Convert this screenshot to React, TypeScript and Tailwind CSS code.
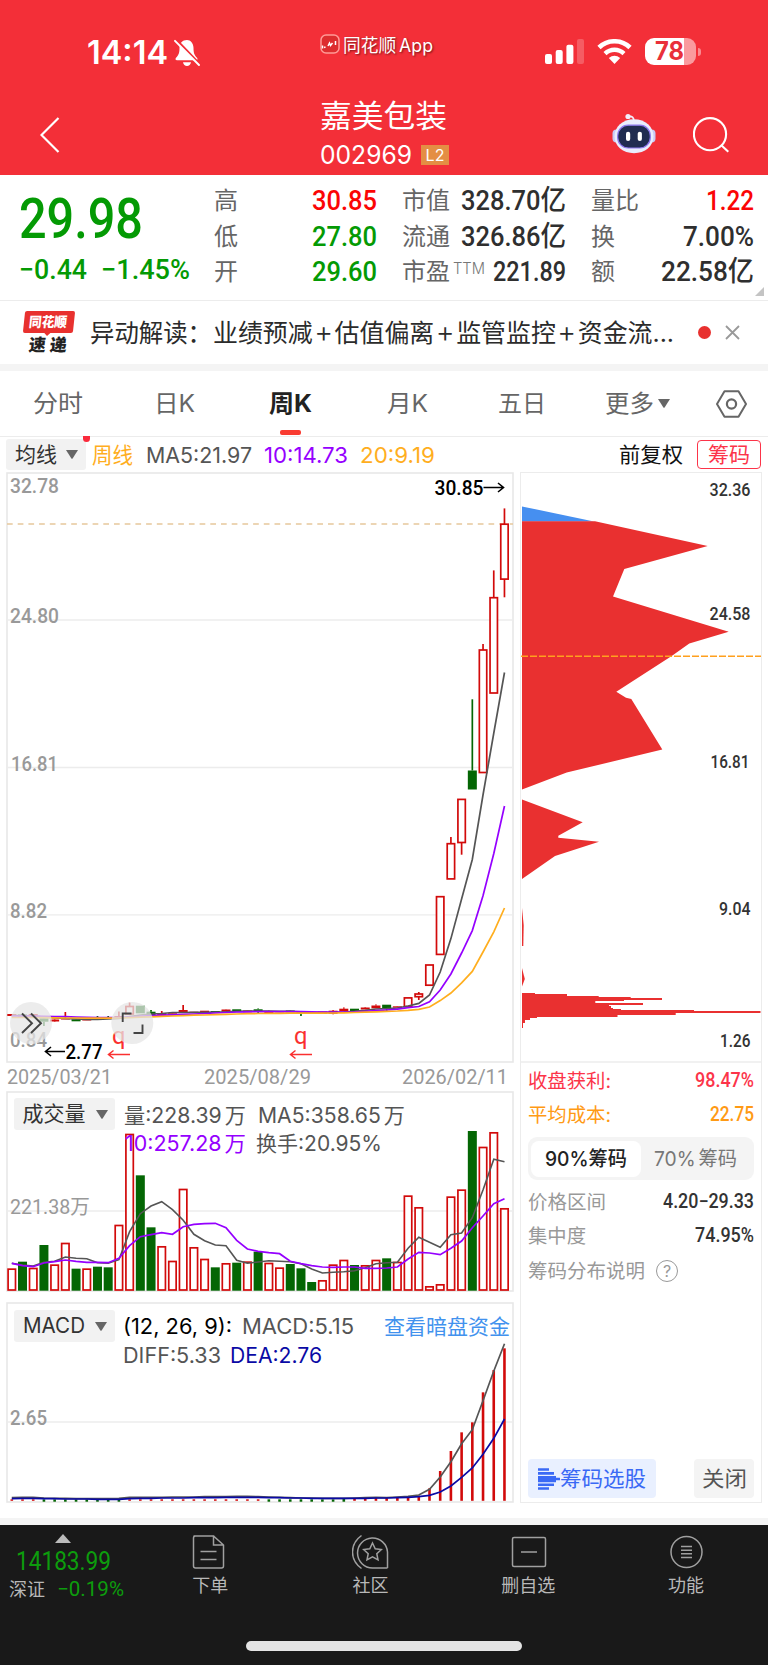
import React, { useLayoutEffect, useRef } from "react";

const X0 = 11.8;
const STEP = 10.71;
const cx = (i: number) => X0 + STEP * i;

/** Single-line text condensed or widened horizontally to fill the width of its box. */
function Fit({ c, children }: { c: string; children: React.ReactNode }) {
  const box = useRef<HTMLSpanElement>(null);
  const inner = useRef<HTMLSpanElement>(null);
  useLayoutEffect(() => {
    if (!box.current || !inner.current) return;
    inner.current.style.transform = "none";
    const w = inner.current.getBoundingClientRect().width;
    inner.current.style.transform = `scaleX(${box.current.clientWidth / w})`;
  });
  return (
    <span ref={box} className={`block shrink-0 whitespace-nowrap text-left ${c}`}>
      <span ref={inner} className="inline-block origin-left">
        {children}
      </span>
    </span>
  );
}

const DIN = "font-['Roboto','Noto_Sans_CJK_SC',sans-serif]";

function Caret({ c }: { c: string }) {
  return (
    <svg viewBox="0 0 12 9" className={`h-[9px] w-[12px] shrink-0 ${c}`}>
      <path d="M0 0H12L6.6 8.4Q6 9 5.4 8.4Z" fill="currentColor" />
    </svg>
  );
}

function StatusBar() {
  return (
    <div className="flex h-[84px] items-start text-white">
      <Fit c="ml-[87px] mt-[35px] w-[81px] text-[32px] font-semibold leading-[36px]">14:14</Fit>
      <svg viewBox="0 0 26 28" className="ml-[6px] mt-[39px] h-[28px] w-[26px]">
        <path d="M13 1c-4.600 0-7.500 3.500-7.500 8 0 5.500-1.200 7.400-3.500 9.800-1 1.200-.5 2.500 1 2.500h19c1.500 0 2-1.300 1-2.500-2.300-2.400-3.500-4.300-3.500-9.800 0-4.500-2.900-8-6.500-8zM9 23.200h8c-.3 2.400-2 3.800-4 3.800s-3.700-1.400-4-3.800z" fill="#fff" />
        <path d="M2 .5L26 25.500" stroke="#f32f38" strokeWidth="2.500" />
        <path d="M1 1.800L25 26" stroke="#fff" strokeWidth="1.900" strokeLinecap="round" />
      </svg>
      <svg viewBox="0 0 20 20" className="ml-[120px] mt-[34px] h-[20px] w-[20px]">
        <rect x="1" y="1" width="18" height="18" rx="5" fill="#dd2d2f" stroke="#ff9a97" strokeWidth="1.500" />
        <path d="M2.500 11.500v3M4 13.500l1.500-.5M8 12l1.500-3 1 2.500 2-2.500M15.500 7v4" stroke="#fff" strokeWidth="1.500" fill="none" />
      </svg>
      <Fit c="ml-[3px] mt-[35px] w-[90px] text-[18px] leading-[22px] [text-shadow:1px_1px_2px_#7a1418]">同花顺<span className="ml-[3px]">App</span></Fit>
      <svg viewBox="0 0 39 25" className="ml-[112px] mt-[39px] h-[25px] w-[39px]">
        <rect x="0" y="15" width="7" height="10" rx="2" fill="#fff" />
        <rect x="10.700" y="11" width="7" height="14" rx="2" fill="#fff" />
        <rect x="21.400" y="5.700" width="7" height="19.300" rx="2" fill="#fff" />
        <rect x="32" y="0" width="7" height="25" rx="2" fill="#fff" opacity=".22" />
      </svg>
      <svg viewBox="0 0 35 25" className="ml-[13px] mt-[39px] h-[25px] w-[35px]" fill="none" stroke="#fff">
        <path d="M2 8.500C10.500 .2 24.500 .2 33 8.500" strokeWidth="4.600" />
        <path d="M8 14.700C13.500 9.500 21.500 9.500 27 14.700" strokeWidth="4.400" />
        <path d="M17.500 25L11.800 19Q17.500 14.500 23.200 19Z" fill="#fff" stroke="none" />
      </svg>
      <div className="ml-[13px] mt-[38px] flex h-[27px] w-[51px] items-center rounded-[9px] bg-linear-to-r from-white from-[39px] to-[#fa9a9e] to-[39px]">
        <Fit c="ml-[10px] w-[29px] text-[25px] font-bold leading-[31px] text-[#e9303a]">78</Fit>
      </div>
      <div className="ml-[1.500px] mt-[48px] h-[8px] w-[3px] rounded-r-full bg-[#fa8a90]" />
    </div>
  );
}

function Header() {
  return (
    <header className="h-[175px] bg-[#f32f38] text-white">
      <StatusBar />
      <div className="flex h-[90px] items-start">
        <svg viewBox="0 0 20 36" className="ml-[40px] mt-[33px] h-[36px] w-[20px]">
          <path d="M18.500 1L1.500 18L18.500 35" fill="none" stroke="#fff" strokeWidth="2.200" />
        </svg>
        <div className="ml-[260px] w-[130px]">
          <Fit c="mt-[14px] w-[127px] text-[31px] leading-[36px]">嘉美包装</Fit>
          <div className="mt-[6px] flex items-center">
            <Fit c="w-[92px] text-[25px] leading-[30px]">002969</Fit>
            <span className="ml-[9px] block h-[20px] w-[28px] shrink-0 bg-[#e48e44] text-center text-[16px] leading-[20px]">L2</span>
          </div>
        </div>
        <svg viewBox="0 0 44 42" className="ml-[162px] mt-[29px] h-[42px] w-[44px]">
          <circle cx="16" cy="3.500" r="2.600" fill="#f2eefc" />
          <path d="M17 3.500Q22 3 21.800 8" fill="none" stroke="#f2eefc" strokeWidth="1.700" />
          <rect x="0.500" y="16.500" width="8" height="13" rx="4" fill="#c9caf6" />
          <rect x="35.500" y="16.500" width="8" height="13" rx="4" fill="#c9caf6" />
          <path d="M22 6.300C33.500 6.300 41.500 14 41.500 23.500S33 40.200 22 40.200 2.500 33 2.500 23.500 10.500 6.300 22 6.300Z" fill="#e9edfd" />
          <rect x="5.700" y="12.200" width="32.600" height="22.800" rx="10.500" fill="#202c50" stroke="#8d78ee" strokeWidth="1.200" />
          <rect x="14" y="18.700" width="4.200" height="9.300" rx="2.100" fill="#fff" />
          <rect x="25.700" y="18.700" width="4.200" height="9.300" rx="2.100" fill="#fff" />
        </svg>
        <svg viewBox="0 0 36 36" className="ml-[37px] mt-[33px] h-[36px] w-[36px]" fill="none" stroke="#fff" strokeWidth="2.100">
          <circle cx="17" cy="17.200" r="16.100" />
          <path d="M28.300 28.300L35.300 34.800" />
        </svg>
      </div>
    </header>
  );
}

function Quote() {
  const lab = "text-[24px] leading-[36px] text-[#666]";
  const val = `${DIN} text-[28px] font-medium leading-[36px]`;
  const row = "flex h-[35.500px] items-center";
  return (
    <section className="relative flex h-[125px]">
      <div className={`ml-[19px] w-[195px] shrink-0 text-[#049a04] ${DIN} font-medium`}>
        <Fit c="mt-[16px] w-[124px] text-[56px] leading-[56px]">29.98</Fit>
        <div className="mt-[7px] flex">
          <Fit c="w-[68px] text-[28px] leading-[32px]">−0.44</Fit>
          <Fit c="ml-[14px] w-[89px] text-[28px] leading-[32px]">−1.45%</Fit>
        </div>
      </div>
      <div className="mt-[8.500px] w-[163px] shrink-0">
        <div className={row}><Fit c={`w-[24px] ${lab}`}>高</Fit><Fit c={`ml-auto w-[65px] text-[#fb0505] ${val}`}>30.85</Fit></div>
        <div className={row}><Fit c={`w-[24px] ${lab}`}>低</Fit><Fit c={`ml-auto w-[65px] text-[#049a04] ${val}`}>27.80</Fit></div>
        <div className={row}><Fit c={`w-[24px] ${lab}`}>开</Fit><Fit c={`ml-auto w-[65px] text-[#049a04] ${val}`}>29.60</Fit></div>
      </div>
      <div className="ml-[25px] mt-[8.500px] w-[164px] shrink-0 text-[#2f2f2f]">
        <div className={row}><Fit c={`w-[48px] ${lab}`}>市值</Fit><Fit c={`ml-auto w-[105px] ${val}`}>328.70亿</Fit></div>
        <div className={row}><Fit c={`w-[48px] ${lab}`}>流通</Fit><Fit c={`ml-auto w-[105px] ${val}`}>326.86亿</Fit></div>
        <div className={row}>
          <Fit c={`w-[48px] ${lab}`}>市盈</Fit>
          <Fit c="mb-[8px] ml-[3px] w-[32px] text-[16px] font-light leading-[20px] text-[#777]">TTM</Fit>
          <Fit c={`ml-auto w-[73px] ${DIN} text-[27px] font-medium leading-[36px]`}>221.89</Fit>
        </div>
      </div>
      <div className="ml-[25px] mt-[8.500px] w-[163px] shrink-0 text-[#2f2f2f]">
        <div className={row}><Fit c={`w-[48px] ${lab}`}>量比</Fit><Fit c={`ml-auto w-[48px] text-[#fb0505] ${val}`}>1.22</Fit></div>
        <div className={row}><Fit c={`w-[24px] ${lab}`}>换</Fit><Fit c={`ml-auto w-[71px] ${val}`}>7.00%</Fit></div>
        <div className={row}><Fit c={`w-[24px] ${lab}`}>额</Fit><Fit c={`ml-auto w-[93px] ${val}`}>22.58亿</Fit></div>
      </div>
      <svg viewBox="0 0 9 9" className="absolute bottom-[4px] right-[4px] h-[9px] w-[9px]"><path d="M9 0V9H0Z" fill="#c4c4c4" /></svg>
    </section>
  );
}

function Plus() {
  return <span className="mx-[1.500px] inline-block text-[29px] font-light leading-[20px]">+</span>;
}

function News() {
  return (
    <section className="flex h-[64px] items-center border-t border-[#ececec]">
      <div className="ml-[22px] flex h-[44px] w-[54px] shrink-0 flex-col items-center">
        <div className="relative flex h-[22px] w-[50px] -skew-x-6 items-center justify-center rounded-[2px] bg-[#e8312f] text-white">
          <Fit c="w-[40px] text-[14px] font-black leading-[20px]">同花顺</Fit>
          <span className="absolute -bottom-[2px] left-[22px] h-[5px] w-[5px] rotate-45 bg-[#e8312f]" />
        </div>
        <div className="mt-[2px] flex -skew-x-6 gap-[2px] text-[17px] font-black leading-[20px] text-[#222]">
          <Fit c="w-[19px]">速</Fit>
          <Fit c="w-[19px]">递</Fit>
        </div>
      </div>
      <div className="ml-[14px] flex text-[25px] leading-[36px] text-[#2b2b2b]">
        <Fit c="w-[122px]">异动解读：</Fit>
        <Fit c="ml-[1px] w-[461px]">业绩预减<Plus />估值偏离<Plus />监管监控<Plus />资金流...</Fit>
      </div>
      <span className="ml-[24px] h-[13px] w-[13px] rounded-full bg-[#e8312f]" />
      <svg viewBox="0 0 15 15" className="ml-[14px] h-[15px] w-[15px]"><path d="M1 1L14 14M14 1L1 14" stroke="#999" strokeWidth="1.800" /></svg>
    </section>
  );
}

function Tabs() {
  const t = "text-[24px] leading-[36px]";
  return (
    <nav className="flex h-[66px] items-center border-b border-[#ececec] text-[#666]">
      <Fit c={`ml-[33px] w-[50px] ${t}`}>分时</Fit>
      <Fit c={`ml-[71px] w-[41px] ${t}`}>日K</Fit>
      <div className="relative ml-[74px]">
        <Fit c={`w-[43px] font-bold text-[#222] ${t}`}>周K</Fit>
        <span className="absolute -bottom-[13px] left-[11px] h-[5px] w-[21px] rounded-[2px] bg-[#f93b31]" />
      </div>
      <Fit c={`ml-[75px] w-[41px] ${t}`}>月K</Fit>
      <Fit c={`ml-[70px] w-[48px] ${t}`}>五日</Fit>
      <Fit c={`ml-[59px] w-[49px] ${t}`}>更多</Fit>
      <Caret c="ml-[4px] text-[#666]" />
      <svg viewBox="0 0 31 28" className="ml-[46px] h-[28px] w-[31px]" fill="none" stroke="#666" strokeWidth="2">
        <path d="M8.500 1.200H22.500L30 14L22.500 26.800H8.500L1 14Z" strokeLinejoin="round" />
        <circle cx="15.500" cy="14" r="4.600" strokeWidth="2.200" />
      </svg>
    </nav>
  );
}

function MaRow() {
  const t = "text-[22px] leading-[30px]";
  return (
    <div className="flex h-[35px] items-center">
      <div className="relative ml-[6px] flex h-[31px] w-[80px] items-center rounded-[3px] bg-[#f2f2f2] pl-[9px] text-[#333]">
        <Fit c="w-[42px] text-[21px] leading-[30px]">均线</Fit>
        <Caret c="ml-[9px] text-[#666]" />
        <span className="absolute -right-[4px] -top-[3px] h-[6px] w-[7px] rounded-b-full bg-[#fa2a3c]" />
      </div>
      <Fit c={`ml-[6px] w-[41px] text-[#ffae1e] ${t}`}>周线</Fit>
      <Fit c={`ml-[13px] w-[106px] text-[#555] ${t}`}>MA5:21.97</Fit>
      <Fit c={`ml-[12px] w-[84px] text-[#9500ff] ${t}`}>10:14.73</Fit>
      <Fit c={`ml-[12px] w-[75px] text-[#ffae1e] ${t}`}>20:9.19</Fit>
      <Fit c="ml-[184px] w-[64px] text-[21px] leading-[30px] text-[#111]">前复权</Fit>
      <div className="ml-[14px] flex h-[29px] w-[64px] items-center justify-center rounded-[4px] border-[1.500px] border-[#fc3449] text-[#fc3449]">
        <Fit c="w-[42px] text-[21px] leading-[26px]">筹码</Fit>
      </div>
    </div>
  );
}

type Candle = [up: number, high: number, top: number, bottom: number, low: number];
const candles: Candle[] = [
  [1, 1014, 1014, 1016, 1016], [0, 1014, 1014.5, 1016.5, 1016.5], [1, 1014, 1014, 1016, 1016], [0, 1018, 1018.3, 1021.7, 1026],
  [1, 1019, 1019.5, 1021.5, 1022], [1, 1012, 1018, 1019.5, 1019.5], [0, 1019, 1019.3, 1021.3, 1021.3], [1, 1019, 1019.3, 1020.5, 1020.5],
  [0, 1016, 1017, 1018.5, 1018.5], [0, 1016, 1017, 1018.5, 1018.5], [1, 1011.5, 1016, 1018, 1018.5], [1, 1002.7, 1006.5, 1014, 1014],
  [0, 1005.7, 1005.7, 1013.3, 1013.3], [0, 1010, 1011.7, 1015, 1015], [1, 1011, 1013, 1015, 1015], [1, 1013, 1013.3, 1014.7, 1015],
  [1, 1005, 1010, 1012.3, 1012.3], [1, 1011.7, 1011.7, 1013, 1013], [1, 1010.7, 1010.7, 1012.5, 1012.5], [0, 1011, 1011, 1012.3, 1012.3],
  [1, 1009.3, 1009.5, 1011.7, 1011.7], [0, 1009.3, 1009.3, 1011, 1011], [1, 1010.3, 1010.5, 1012.3, 1012.3], [0, 1008.5, 1009.3, 1012, 1014],
  [1, 1010.7, 1011, 1013.3, 1013.3], [1, 1011.3, 1011.3, 1012.3, 1012.3], [0, 1010.3, 1010.5, 1012.3, 1012.3], [0, 1012, 1012.3, 1014, 1016],
  [0, 1012, 1012, 1013.7, 1013.7], [1, 1011.3, 1011.5, 1013.7, 1013.7], [1, 1010, 1010.7, 1013.7, 1014.3], [1, 1007.5, 1008.7, 1011.3, 1011.3],
  [0, 1008.7, 1008.7, 1011, 1011], [1, 1007, 1007.5, 1009.5, 1009.5], [1, 1004.5, 1005.5, 1008.3, 1008.3], [0, 1004.7, 1004.7, 1008, 1011.5],
  [1, 1006, 1006.3, 1007.7, 1007.7], [1, 997.9, 997.9, 1006.6, 1006.6], [1, 992, 994, 996.7, 1000], [1, 965, 965, 985.2, 985.2],
  [1, 896.7, 896.7, 954.4, 954.4], [1, 837, 843.7, 878.9, 878.9], [1, 799.4, 799.4, 842.5, 854.7], [0, 699.3, 770.5, 789.5, 789.5],
  [1, 644, 650, 772.5, 772.5], [1, 570.4, 597.7, 693, 693], [1, 508.4, 524.2, 579.1, 597.3],
];

const ma5 = [1015.5, 1015.5, 1016, 1017, 1018, 1018.5, 1019, 1019.5, 1019.5, 1019, 1018.5, 1016.5, 1015, 1014, 1013.5, 1012.5, 1012.5, 1012.3, 1012.3, 1012, 1011.8, 1011.3, 1011.2, 1011.2, 1011.2, 1011.3, 1011.3, 1011.8, 1012.3, 1012.5, 1012.3, 1012, 1011.3, 1010.3, 1009, 1008.7, 1008, 1006, 1003.4, 995, 972, 938.6, 899, 859.5, 795, 733, 672.5];
const ma10 = [1016, 1016, 1016, 1016.3, 1016.5, 1016.7, 1017, 1017.3, 1017.5, 1017.5, 1017.5, 1017, 1016.3, 1015.7, 1015.2, 1014.8, 1014.3, 1014, 1013.5, 1013, 1012.5, 1012, 1011.8, 1011.7, 1011.7, 1011.7, 1011.7, 1011.7, 1011.8, 1012, 1012, 1012, 1011.8, 1011.3, 1010.7, 1010, 1009.2, 1007.7, 1006.5, 1001.8, 990, 974, 953, 930.6, 895.8, 853.5, 806];
const ma20 = [1017.5, 1017.5, 1017.5, 1017.6, 1017.8, 1018, 1018, 1018.2, 1018.2, 1018.2, 1018, 1017.7, 1017.2, 1016.8, 1016.3, 1016, 1015.6, 1015.2, 1015, 1014.7, 1014.3, 1014, 1013.7, 1013.5, 1013.4, 1013.3, 1013.2, 1013.2, 1013.2, 1013.2, 1013, 1012.8, 1012.5, 1012.2, 1011.8, 1011.3, 1011, 1010.3, 1009.3, 1007, 1000.6, 993, 982.8, 971.4, 952, 931.8, 908];

const pts = (ys: number[], f = (v: number) => v) => ys.map((y, i) => `${cx(i).toFixed(1)},${f(y).toFixed(1)}`).join(" ");

function AxisText({ x, y, w, children, size = 20.5, fill = "#999", weight = 500 }: { x: number; y: number; w: number; children: string; size?: number; fill?: string; weight?: number }) {
  return (
    <text x={x} y={y} textLength={w} lengthAdjust="spacingAndGlyphs" fontSize={size} fontWeight={weight} fill={fill} className={DIN}>
      {children}
    </text>
  );
}

function PriceChart() {
  return (
    <div className="relative h-[591px] w-[508px]">
      <svg viewBox="6 472 508 591" className="block h-[591px] w-[508px]">
        <rect x="7" y="473" width="506" height="589" fill="none" stroke="#e8e8e8" strokeWidth="1.600" />
        {[620, 767.5, 914.8].map((y) => <line key={y} x1="7" x2="513" y1={y} y2={y} stroke="#ececec" strokeWidth="1.300" />)}
        <line x1="7" x2="513" y1="524" y2="524" stroke="#e6c79c" strokeWidth="1.500" strokeDasharray="5.700 5" />
        <AxisText x={10} y={493} w={49}>32.78</AxisText>
        <AxisText x={10} y={623} w={49}>24.80</AxisText>
        <AxisText x={11} y={770.5} w={47}>16.81</AxisText>
        <AxisText x={10} y={918} w={37}>8.82</AxisText>
        <AxisText x={10} y={1047} w={37}>0.84</AxisText>
        {candles.map(([up, high, top, bottom, low], i) => {
          const x = cx(i);
          const col = up ? "#d20a0a" : "#046604";
          const thin = bottom - top < 3.2 && i !== 38;
          return (
            <g key={i} stroke={col} strokeWidth="1.700" fill={up && !thin ? "#fff" : col}>
              {high < top && <line x1={x} x2={x} y1={high} y2={top} />}
              {low > bottom && <line x1={x} x2={x} y1={bottom} y2={low} />}
              {up && !thin ? (
                <rect x={x - 3.7} y={top} width="7.400" height={bottom - top} />
              ) : (
                <rect x={x - 4.5} y={top} width="9" height={bottom - top} stroke="none" />
              )}
            </g>
          );
        })}
        <polyline points={pts(ma5)} fill="none" stroke="#555" strokeWidth="1.700" />
        <polyline points={pts(ma10)} fill="none" stroke="#9500ff" strokeWidth="1.700" />
        <polyline points={pts(ma20)} fill="none" stroke="#ffae1e" strokeWidth="1.700" />
        <AxisText x={434.5} y={495} w={49} fill="#000">30.85</AxisText>
        <path d="M483.500 487.500H503M498 483L503.500 487.500L498 492" fill="none" stroke="#000" strokeWidth="1.600" />
        <AxisText x={65.5} y={1059} w={37} fill="#000">2.77</AxisText>
        <path d="M65 1051.500H46M51 1047L45.500 1051.500L51 1056" fill="none" stroke="#000" strokeWidth="1.600" />
        {[108, 290].map((x) => (
          <g key={x}>
            <text x={x + 4} y="1043.500" fontSize="24" fill="#fa3030" textLength="13.500" lengthAdjust="spacingAndGlyphs" className={DIN}>q</text>
            <path d={`M${x + 22} 1054.500H${x + 1}M${x + 5.5} 1050.500L${x + 0.5} 1054.500L${x + 5.5} 1058.500`} fill="none" stroke="#fa3030" strokeWidth="1.500" />
          </g>
        ))}
        <circle cx="31" cy="1023" r="21" fill="#e6e6e6" fillOpacity=".75" />
        <circle cx="132.300" cy="1023" r="21" fill="#e6e6e6" fillOpacity=".75" />
        <path d="M22 1013.500L32 1023.300L22 1033M31 1013.500L41 1023.300L31 1033M122.700 1022V1013.500H131.500M133.500 1033H142.500V1024.500" fill="none" stroke="#444" strokeWidth="1.900" />
      </svg>
    </div>
  );
}

function Tag({ label, w }: { label: string; w: string }) {
  return (
    <div className="ml-[7.500px] flex h-[32px] w-[101px] shrink-0 items-center rounded-[3px] bg-[#f2f2f2] pl-[9px] text-[#333]">
      <Fit c={`text-[21px] leading-[30px] ${w}`}>{label}</Fit>
      <Caret c="ml-[10px] text-[#666]" />
    </div>
  );
}

const volumes: [up: number, top: number][] = [
  [1, 551], [0, 530], [1, 549], [0, 480], [1, 539], [1, 474], [0, 551], [1, 551], [0, 545], [0, 547], [1, 420], [1, 147],
  [0, 271], [0, 427], [1, 484], [1, 528], [1, 312], [1, 487], [1, 522], [0, 547], [1, 535], [0, 533], [1, 530], [0, 500],
  [1, 534], [1, 548], [0, 537], [0, 550], [0, 591], [1, 586], [1, 539], [1, 525], [0, 540], [1, 541], [1, 525], [0, 520],
  [1, 531], [1, 332], [1, 367], [1, 604], [1, 598], [1, 335], [1, 314], [0, 138], [1, 186], [1, 142], [1, 370],
];
const vMa5 = [535, 540, 543, 532, 529, 516, 520, 521, 533, 535, 524, 440, 386, 363, 350, 374, 406, 448, 467, 480, 482, 526, 535, 531, 527, 529, 530, 536, 552, 564, 562, 560, 557, 548, 536, 533, 532, 490, 457, 472, 487, 449, 444, 398, 315, 223, 230];
const vMa10 = [535, 542, 545, 534, 530, 525, 529, 532, 532, 533, 520, 482, 455, 449, 443, 448, 425, 418, 416, 415, 428, 466, 492, 499, 503, 506, 529, 536, 542, 546, 547, 546, 546, 550, 550, 549, 546, 522, 502, 504, 509, 490, 468, 428, 393, 356, 341];
const vy = (v: number) => 1085 + v / 3;

function VolumeChart() {
  return (
    <div className="relative h-[201px] w-[508px]">
      <svg viewBox="6 1091 508 201" className="absolute inset-0 h-[201px] w-[508px]">
        <rect x="7" y="1092" width="506" height="199" fill="none" stroke="#e8e8e8" strokeWidth="1.600" />
        <line x1="7" x2="513" y1="1211" y2="1211" stroke="#ececec" strokeWidth="1.300" />
        <AxisText x={10} y={1214} w={80} weight={400}>221.38万</AxisText>
        {volumes.map(([up, t], i) =>
          up ? (
            <rect key={i} x={cx(i) - 3.7} y={vy(t) + 0.5} width="7.400" height={1289.5 - vy(t)} fill="#fff" stroke="#d20a0a" strokeWidth="1.700" />
          ) : (
            <rect key={i} x={cx(i) - 4.5} y={vy(t)} width="9" height={1290.7 - vy(t)} fill="#046604" />
          ),
        )}
        <polyline points={pts(vMa5, vy)} fill="none" stroke="#555" strokeWidth="1.600" />
        <polyline points={pts(vMa10, vy)} fill="none" stroke="#9500ff" strokeWidth="1.700" />
      </svg>
      <div className="relative flex pt-[7px] text-[21px] leading-[28px] text-[#555]">
        <Tag label="成交量" w="w-[63px]" />
        <div className="ml-[9px] pt-[4px]">
          <div className="flex"><Fit c="w-[122px]">量:228.39<span className="ml-[3px]">万</span></Fit><Fit c="ml-[12px] w-[147px]">MA5:358.65<span className="ml-[3px]">万</span></Fit></div>
          <div className="flex"><Fit c="ml-[1px] w-[121px] text-[#9500ff]">10:257.28<span className="ml-[3px]">万</span></Fit><Fit c="ml-[10px] w-[126px]">换手:20.95%</Fit></div>
        </div>
      </div>
    </div>
  );
}

const my = (v: number) => 1295 + v / 3;
const macdTail = [611, 610, 610, 609, 609, 609, 608, 602, 580, 528, 468, 412, 382, 292, 225, 160];
const diff = [608, 607, 607, 609, 610, 610, 611, 611, 611, 611, 610, 607, 607, 607, 607, 606, 606, 606, 605, 605, 605, 604, 604, 605, 606, 607, 608, 609, 609, 610, 610, 610, 609, 608, 607, 608, 606, 604, 600, 583, 546, 500, 446, 404, 317, 228, 146];
const dea = [611, 610, 610, 611, 611, 612, 612, 612, 613, 613, 613, 611, 610, 610, 609, 609, 609, 608, 608, 608, 607, 607, 607, 607, 608, 608, 609, 609, 610, 610, 610, 610, 610, 610, 609, 609, 608, 607, 605, 601, 591, 573, 547, 519, 478, 430, 372];

function MacdChart() {
  return (
    <div className="relative h-[201px] w-[508px]">
      <svg viewBox="6 1302 508 201" className="absolute inset-0 h-[201px] w-[508px]">
        <rect x="7" y="1303" width="506" height="199" fill="none" stroke="#e8e8e8" strokeWidth="1.600" />
        <line x1="7" x2="513" y1="1422" y2="1422" stroke="#ececec" strokeWidth="1.300" />
        <AxisText x={10} y={1425} w={37}>2.65</AxisText>
        {diff.map((_, i) => {
          const green = (i > 2 && i < 11) || (i > 23 && i < 32);
          const top = i >= 31 ? macdTail[i - 31] : 613;
          return <line key={i} x1={cx(i)} x2={cx(i)} y1={my(top)} y2={green ? 1501.7 : 1500.8} stroke={green ? "#046604" : "#d20a0a"} strokeWidth="2.600" />;
        })}
        <polyline points={pts(diff, my)} fill="none" stroke="#555" strokeWidth="1.700" />
        <polyline points={pts(dea, my)} fill="none" stroke="#0a0aa5" strokeWidth="1.700" />
      </svg>
      <div className="relative flex pt-[8px] text-[21px] leading-[29px] text-[#555]">
        <Tag label="MACD" w="w-[62px]" />
        <div className="ml-[8.500px] pt-[2px]">
          <div className="flex">
            <Fit c="w-[109px] text-black">(12, 26, 9):</Fit>
            <Fit c="ml-[10px] w-[112px]">MACD:5.15</Fit>
            <Fit c="ml-[30px] w-[126px] text-[#4292ee]">查看暗盘资金</Fit>
          </div>
          <div className="flex"><Fit c="w-[98px]">DIFF:5.33</Fit><Fit c="ml-[9px] w-[92px] text-[#0a0aa5]">DEA:2.76</Fit></div>
        </div>
      </div>
    </div>
  );
}

const chipRows: [y: number, right: number][] = [
  [993, 535], [994, 567], [996, 598.7], [997, 630.7], [998, 662], [1000, 624],
  [1001, 595.3], [1003, 643], [1005, 609], [1006, 611], [1008, 613], [1009, 621],
  [1010, 694], [1011, 760.5], [1013, 675.7], [1015, 617.5], [1017, 537], [1018, 530],
  [1020, 525], [1023, 523], [1028, 522],
];

function ChipChart() {
  return (
    <svg viewBox="520 472 242 591" className="block h-[591px] w-[242px] shrink-0">
      <path d="M522 506.400L594 521.500H522Z" fill="#468ff0" />
      <g fill="#e93030">
        <path d="M522 521.300H595L707.700 546L624.300 569L613 596.500L728.700 631.700L689.300 643.600L671.700 656L616.300 691.800L626 697.800L631.300 699L662.300 749.600L566.700 772.500L522 789.500Z" />
        <path d="M522 799.400L582.700 822.300L558.300 835.800V837.700L599 841.700L555 856L522 879Z" />
        <path d="M522 908L523.700 925L523.300 946H522Z" />
        <path d="M522 968L524.800 979L522 986.500Z" />
        {chipRows.slice(0, -1).map(([y, r], i) => <rect key={y} x="522" y={y} width={r - 522} height={chipRows[i + 1][0] - y} />)}
      </g>
      <line x1="521" x2="761" y1="656.300" y2="656.300" stroke="#ffa01e" strokeWidth="1.600" strokeDasharray="7 2" />
      <AxisText x={709.5} y={496} w={41} size={18} fill="#333">32.36</AxisText>
      <AxisText x={709.5} y={619.5} w={41} size={18} fill="#333">24.58</AxisText>
      <AxisText x={710.5} y={767.5} w={39} size={18} fill="#333">16.81</AxisText>
      <AxisText x={719} y={915} w={31.5} size={18} fill="#333">9.04</AxisText>
      <AxisText x={720} y={1046.5} w={30.5} size={18} fill="#333">1.26</AxisText>
      <line x1="521" x2="761" y1="1062" y2="1062" stroke="#ececec" strokeWidth="1.500" />
    </svg>
  );
}

function InfoRow({ label, lw, value, vw, c, v = "" }: { label: string; lw: string; value: string; vw: string; c: string; v?: string }) {
  return (
    <div className={`flex h-[34px] items-center justify-between text-[19.500px] leading-[28px] ${c}`}>
      <Fit c={lw}>{label}</Fit>
      <Fit c={`${DIN} font-medium ${vw} ${v}`}>{value}</Fit>
    </div>
  );
}

function ChipPanel() {
  return (
    <aside className="ml-[6px] flex h-[1031px] w-[242px] flex-col border border-[#ececec]">
      <div className="-mx-px -mt-px"><ChipChart /></div>
      <div className="ml-[7px] mr-[7px] flex grow flex-col pt-[1px]">
        <InfoRow label="收盘获利:" lw="w-[83px]" value="98.47%" vw="w-[59px]" c="text-[#fc3449]" />
        <InfoRow label="平均成本:" lw="w-[83px]" value="22.75" vw="w-[44px]" c="text-[#ff9a14]" />
        <div className="mt-[5px] flex h-[43px] items-center rounded-[9px] bg-[#f4f4f4] px-[3px] text-[20px] leading-[28px]">
          <div className="flex h-[36px] w-[110px] items-center justify-center rounded-[8px] bg-white text-[#222]"><Fit c="w-[82px] font-medium">90%筹码</Fit></div>
          <Fit c="ml-[13px] w-[83px] text-[#777]">70%<span className="ml-[3px]">筹码</span></Fit>
        </div>
        <div className="mt-[5px]">
          <InfoRow label="价格区间" lw="w-[78px]" value="4.20−29.33" vw="w-[91px]" c="text-[#999]" v="text-[#333]" />
          <InfoRow label="集中度" lw="w-[58px]" value="74.95%" vw="w-[59px]" c="text-[#999]" v="text-[#333]" />
        </div>
        <div className="flex h-[36px] items-center text-[19.500px] leading-[28px] text-[#999]">
          <Fit c="w-[117px]">筹码分布说明</Fit>
          <span className="ml-[11px] flex h-[22px] w-[22px] items-center justify-center rounded-full border-[1.500px] border-[#999] text-[16px] leading-none">?</span>
        </div>
        <div className="mb-[4px] mt-auto flex h-[39px] justify-between text-[21px] leading-[30px]">
          <div className="flex w-[128px] items-center rounded-[4px] bg-[#e9f0ff] pl-[10px] text-[#3a69f5]">
            <svg viewBox="0 0 22 22" className="h-[22px] w-[22px]" stroke="currentColor" strokeWidth="2.600">
              <path d="M0 1.500H11M0 5.400H16M0 9.200H18M0 11H22M0 12.900H18M0 16.700H16M0 20.500H11" />
            </svg>
            <Fit c="w-[86px]">筹码选股</Fit>
          </div>
          <div className="flex w-[60px] items-center justify-center rounded-[4px] bg-[#f4f4f4] text-[#555]"><Fit c="w-[45px]">关闭</Fit></div>
        </div>
      </div>
    </aside>
  );
}

function NavItem({ label, w, box, children }: { label: string; w: string; box: string; children: React.ReactNode }) {
  return (
    <div className={`flex flex-col items-center pt-[8px] ${box}`}>
      <svg viewBox="0 0 38 38" className="h-[38px] w-[38px]" fill="none" stroke="#a0a0a0" strokeWidth="1.500">{children}</svg>
      <Fit c={`mt-[1px] text-[18px] leading-[28px] text-[#b8b8b8] ${w}`}>{label}</Fit>
    </div>
  );
}

function BottomBar() {
  return (
    <footer className="h-[140px] bg-[#191919]">
      <div className="flex h-[114px]">
        <div className="flex w-[132px] flex-col">
          <svg viewBox="0 0 16 9" className="ml-[55px] mt-[9px] h-[9px] w-[16px]"><path d="M8 0L16 9H0Z" fill="#bbb" /></svg>
          <Fit c={`ml-[16px] mt-[4px] w-[95px] text-[25px] leading-[30px] text-[#0d9d0d] ${DIN}`}>14183.99</Fit>
          <div className="flex items-center">
            <Fit c="ml-[9px] w-[36px] text-[18px] leading-[26px] text-[#b8b8b8]">深证</Fit>
            <Fit c={`-mt-[2px] ml-[12px] w-[67px] text-[21px] leading-[26px] text-[#0d9d0d] ${DIN}`}>−0.19%</Fit>
          </div>
        </div>
        <NavItem label="下单" w="w-[36px]" box="w-[157px]">
          <path d="M2.500 3H22.500L32.500 12V33Q32.500 35 30.500 35H4.500Q2.500 35 2.500 33V5Q2.500 3 4.500 3H22.500V12H32.500M9.500 18.500H25.500M9.500 26.500H25.500" />
        </NavItem>
        <NavItem label="社区" w="w-[36px]" box="w-[164px]">
          <path d="M9.500 2.500Q0.500 9 0.500 19T9.500 35.500M35.500 35V19A15 15 0 1 0 20.500 35H35.500" />
          <path d="M20.500 10L23.200 15.800L29.300 16.500L24.800 20.700L26 26.800L20.500 23.800L15 26.800L16.200 20.700L11.700 16.500L17.800 15.800Z" />
        </NavItem>
        <NavItem label="删自选" w="w-[54px]" box="w-[152px]">
          <rect x="3.500" y="4.500" width="33" height="29" rx="1.500" />
          <path d="M12 19H28" />
        </NavItem>
        <NavItem label="功能" w="w-[36px]" box="w-[164px]">
          <circle cx="19.500" cy="19" r="15.500" />
          <path d="M14 13.500H25M14 17.200H25M14 20.800H25M14 24.500H25" />
        </NavItem>
      </div>
      <div className="mx-auto mt-[2px] h-[10px] w-[276px] rounded-full bg-[#e4e4e4]" />
    </footer>
  );
}

export default function App() {
  return (
    <div className="h-[1665px] w-[768px] overflow-hidden bg-white font-['Inter','Noto_Sans_CJK_SC',sans-serif]">
      <Header />
      <Quote />
      <News />
      <div className="h-[7px] bg-[#f4f4f4]" />
      <Tabs />
      <MaRow />
      <main className="flex h-[1046px] pl-[6px]">
        <div className="flex w-[508px] flex-col">
          <PriceChart />
          <div className={`flex h-[28px] items-center pl-px text-[20.500px] leading-[24px] text-[#999] ${DIN}`}>
            <Fit c="w-[105px]">2025/03/21</Fit>
            <Fit c="ml-[92px] w-[107px]">2025/08/29</Fit>
            <Fit c="ml-[91px] w-[106px]">2026/02/11</Fit>
          </div>
          <VolumeChart />
          <div className="h-[10px]" />
          <MacdChart />
        </div>
        <ChipPanel />
      </main>
      <div className="h-[7px] bg-[#f4f4f4]" />
      <BottomBar />
    </div>
  );
}
